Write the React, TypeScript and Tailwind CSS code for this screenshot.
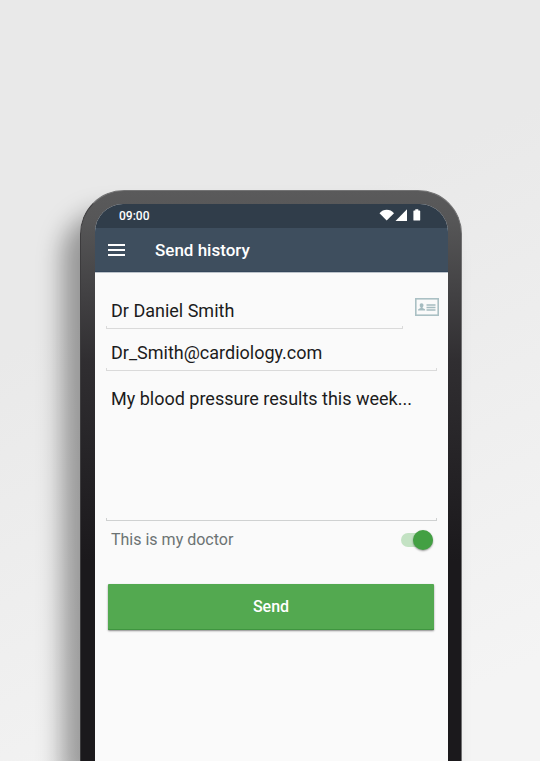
import { useState } from "react";

function FieldLine({ tone }: { tone: string }) {
  return <span aria-hidden="true" className={`block h-[3px] w-full border-x border-b ${tone}`} />;
}

function StatusBar() {
  return (
    <div className="flex h-6 items-center justify-between bg-[#303d4a] pr-[27px] pl-6 text-xs font-medium text-white">
      <span>09:00</span>
      <svg viewBox="0 0 42 13" className="mb-1 h-[13px] w-[42px] fill-white" aria-hidden="true">
        <path d="M.5 5.2C4.3.6 11.2.6 15 5.2L7.7 12.6Z" />
        <path d="M28 1.2V13H16.5Z" />
        <path d="M36.3 1.2h3v1.2h1.2q.7 0 .7.7v8.800q0 .7-.7.7h-5.400q-.7 0-.7-.7v-8.800q0-.7.7-.7h1.200Z" />
      </svg>
    </div>
  );
}

function AppBar() {
  return (
    <header className="flex h-11 items-center gap-[30px] border-b border-[#34465a] bg-[#3e4e5e] px-[13px] text-white shadow-[0_1px_0_#bcc3ca]">
      <button type="button" aria-label="Open menu">
        <svg viewBox="0 0 17 12" className="h-3 w-[17px] fill-white" aria-hidden="true">
          <path d="M0 0h17v2H0ZM0 5h17v2H0ZM0 10h17v2H0Z" />
        </svg>
      </button>
      <h1 className="text-[17px] leading-6 font-medium">Send history</h1>
    </header>
  );
}

function ContactIcon() {
  return (
    <svg viewBox="0 0 24 18" className="h-[18px] w-6" aria-hidden="true">
      <rect x="0.8" y="0.8" width="22.4" height="16.4" fill="none" stroke="#aac0c4" strokeWidth="1.6" />
      <path
        fill="#a5bcc0"
        d="M6.500 5.300c1.300 0 2 .8 2 2 0 .9-.4 1.600-.9 2v.8l2 .8q.6.300.6 1.600H3q0-1.300.6-1.600l2-.8v-.8c-.6-.4-.9-1.100-.9-2 0-1.200.6-2 1.800-2Z"
      />
      <path d="M11.500 7h9M11.500 9.500h9M11.500 12h9" stroke="#a5bcc0" strokeWidth="1.500" />
    </svg>
  );
}

export default function App() {
  const [mine, setMine] = useState(true);

  return (
    <main
      className="flex min-h-screen flex-col overflow-hidden bg-[linear-gradient(155deg,#e9e9e9_0%,#e9e9e9_35%,#f4f4f4_90%)] pt-[190px] pr-[78px] pl-20 antialiased"
      style={{ fontFamily: 'Roboto, "Liberation Sans", sans-serif' }}
    >
      <div className="flex flex-1 flex-col rounded-t-[44px] border-x border-t border-t-[#737374] border-r-[#717172] border-l-[#3c3b3d] bg-[linear-gradient(#5a5a5b_0px,#565657_30px,#302e31_170px,#1b191c_370px)] pt-[13px] pr-[13px] pl-3.5 shadow-[-18px_22px_24px_rgba(0,0,0,0.36)]">
        <div className="flex flex-1 flex-col overflow-hidden rounded-t-[28px] bg-[#fafafa]">
          <StatusBar />
          <AppBar />

          <form
            className="flex flex-col px-[11px] pt-[22px] text-lg leading-6 text-[#1c1c1c]"
            onSubmit={(event) => event.preventDefault()}
          >
            <div className="flex items-start gap-3">
              <div className="min-w-0 flex-1 pt-1">
                <input
                  type="text"
                  aria-label="Recipient name"
                  defaultValue="Dr Daniel Smith"
                  className="block h-7 w-full bg-transparent px-[5px] pb-1 outline-none"
                />
                <FieldLine tone="border-[#dadada]" />
              </div>
              <button type="button" aria-label="Choose a contact" className="-mr-0.5 pt-1">
                <ContactIcon />
              </button>
            </div>

            <div className="pt-[11px]">
              <input
                type="email"
                aria-label="Recipient email"
                defaultValue="Dr_Smith@cardiology.com"
                className="block h-7 w-full bg-transparent px-[5px] pb-1 outline-none"
              />
              <FieldLine tone="border-[#dadada]" />
            </div>

            <div className="pt-4">
              <textarea
                aria-label="Message"
                defaultValue="My blood pressure results this week..."
                className="block h-[131px] w-full resize-none bg-transparent px-[5px] outline-none"
              />
              <FieldLine tone="border-[#cfd1d1]" />
            </div>

            <label className="flex h-[38px] items-center justify-between pr-1 pl-[5px] text-base text-[#6c7373]">
              This is my doctor
              <span className="relative flex h-5 w-8 items-center">
                <input
                  type="checkbox"
                  role="switch"
                  checked={mine}
                  onChange={(event) => setMine(event.target.checked)}
                  className="peer h-3.5 w-8 appearance-none rounded-full bg-[#d0d0d0] checked:bg-[#c3e2c3]"
                />
                <span className="pointer-events-none absolute left-0 size-5 rounded-full bg-white shadow-[0_1px_2px_rgba(0,0,0,0.4)] peer-checked:left-3 peer-checked:bg-[#43a043]" />
              </span>
            </label>

            <button
              type="submit"
              className="mr-[3px] ml-0.5 mt-[25px] h-[46px] rounded-[1px] bg-[#53a950] text-base font-medium text-white shadow-[inset_0_-1px_0_#3f953f,0_1px_2px_rgba(0,0,0,0.45)]"
            >
              Send
            </button>
          </form>
        </div>
      </div>
    </main>
  );
}
